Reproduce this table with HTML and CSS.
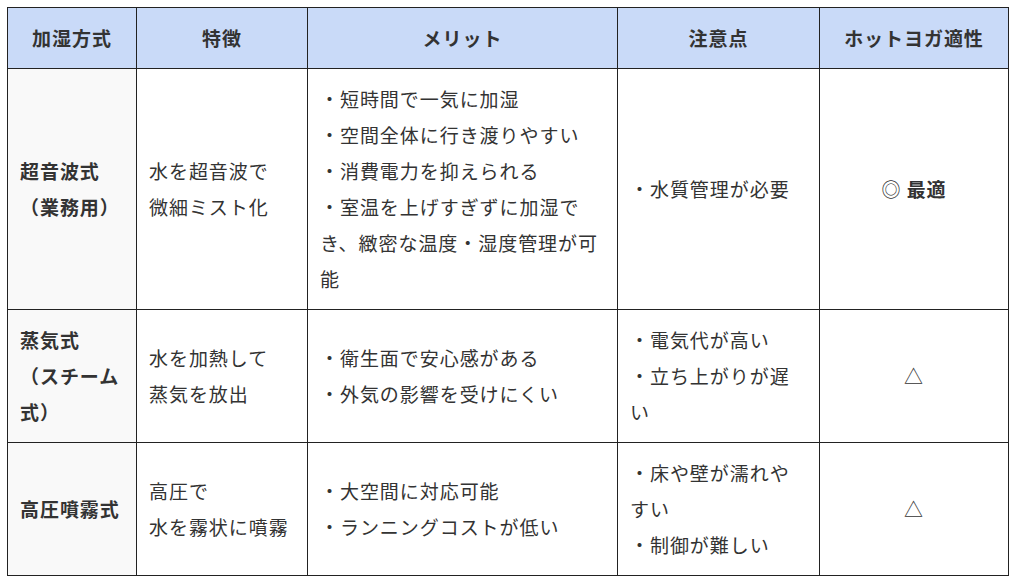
FILE: index.html
```html
<!DOCTYPE html>
<html lang="ja">
<head>
<meta charset="utf-8">
<title>加湿方式の比較</title>
<link rel="stylesheet" href="styles.css">
</head>
<body>
<div class="wrap">
<table class="compare">
  <colgroup>
    <col class="c1"><col class="c2"><col class="c3"><col class="c4"><col class="c5">
  </colgroup>
  <thead>
    <tr>
      <th>加湿方式</th>
      <th>特徴</th>
      <th>メリット</th>
      <th>注意点</th>
      <th>ホットヨガ適性</th>
    </tr>
  </thead>
  <tbody>
    <tr>
      <td class="name">超音波式<br>（業務用）</td>
      <td>水を超音波で<br>微細ミスト化</td>
      <td>・短時間で一気に加湿<br>・空間全体に行き渡りやすい<br>・消費電力を抑えられる<br>・室温を上げすぎずに加湿でき、緻密な温度・湿度管理が可能</td>
      <td>・水質管理が必要</td>
      <td class="fit">◎ <strong>最適</strong></td>
    </tr>
    <tr>
      <td class="name">蒸気式<br>（スチーム式）</td>
      <td>水を加熱して<br>蒸気を放出</td>
      <td>・衛生面で安心感がある<br>・外気の影響を受けにくい</td>
      <td>・電気代が高い<br>・立ち上がりが遅い</td>
      <td class="fit">△</td>
    </tr>
    <tr>
      <td class="name">高圧噴霧式</td>
      <td>高圧で<br>水を霧状に噴霧</td>
      <td>・大空間に対応可能<br>・ランニングコストが低い</td>
      <td>・床や壁が濡れやすい<br>・制御が難しい</td>
      <td class="fit">△</td>
    </tr>
  </tbody>
</table>
</div>
</body>
</html>
```
FILE: styles.css
```css
html, body {
  margin: 0;
  padding: 0;
  background: #ffffff;
}
.wrap {
  padding: 7px 0 0 7px;
}
.compare {
  border-collapse: collapse;
  table-layout: fixed;
  width: 1001px;
  font-family: "Noto Sans CJK JP", "Noto Sans", sans-serif;
  font-size: 19px;
  letter-spacing: 0.95px;
  line-height: 36px;
  color: #333333;
}
.c1 { width: 129px; }
.c2 { width: 171px; }
.c3 { width: 310px; }
.c4 { width: 202px; }
.c5 { width: 189px; }
.compare th,
.compare td {
  border: 1px solid #222222;
  padding: 12px 12px;
  vertical-align: middle;
  text-align: left;
  font-weight: 400;
}
.compare th {
  background: #c9daf8;
  text-align: center;
  font-weight: 700;
}
.compare td.name {
  background: #f9f9f9;
  font-weight: 700;
}
.compare td.fit {
  text-align: center;
}
.compare strong {
  font-weight: 700;
}
```
